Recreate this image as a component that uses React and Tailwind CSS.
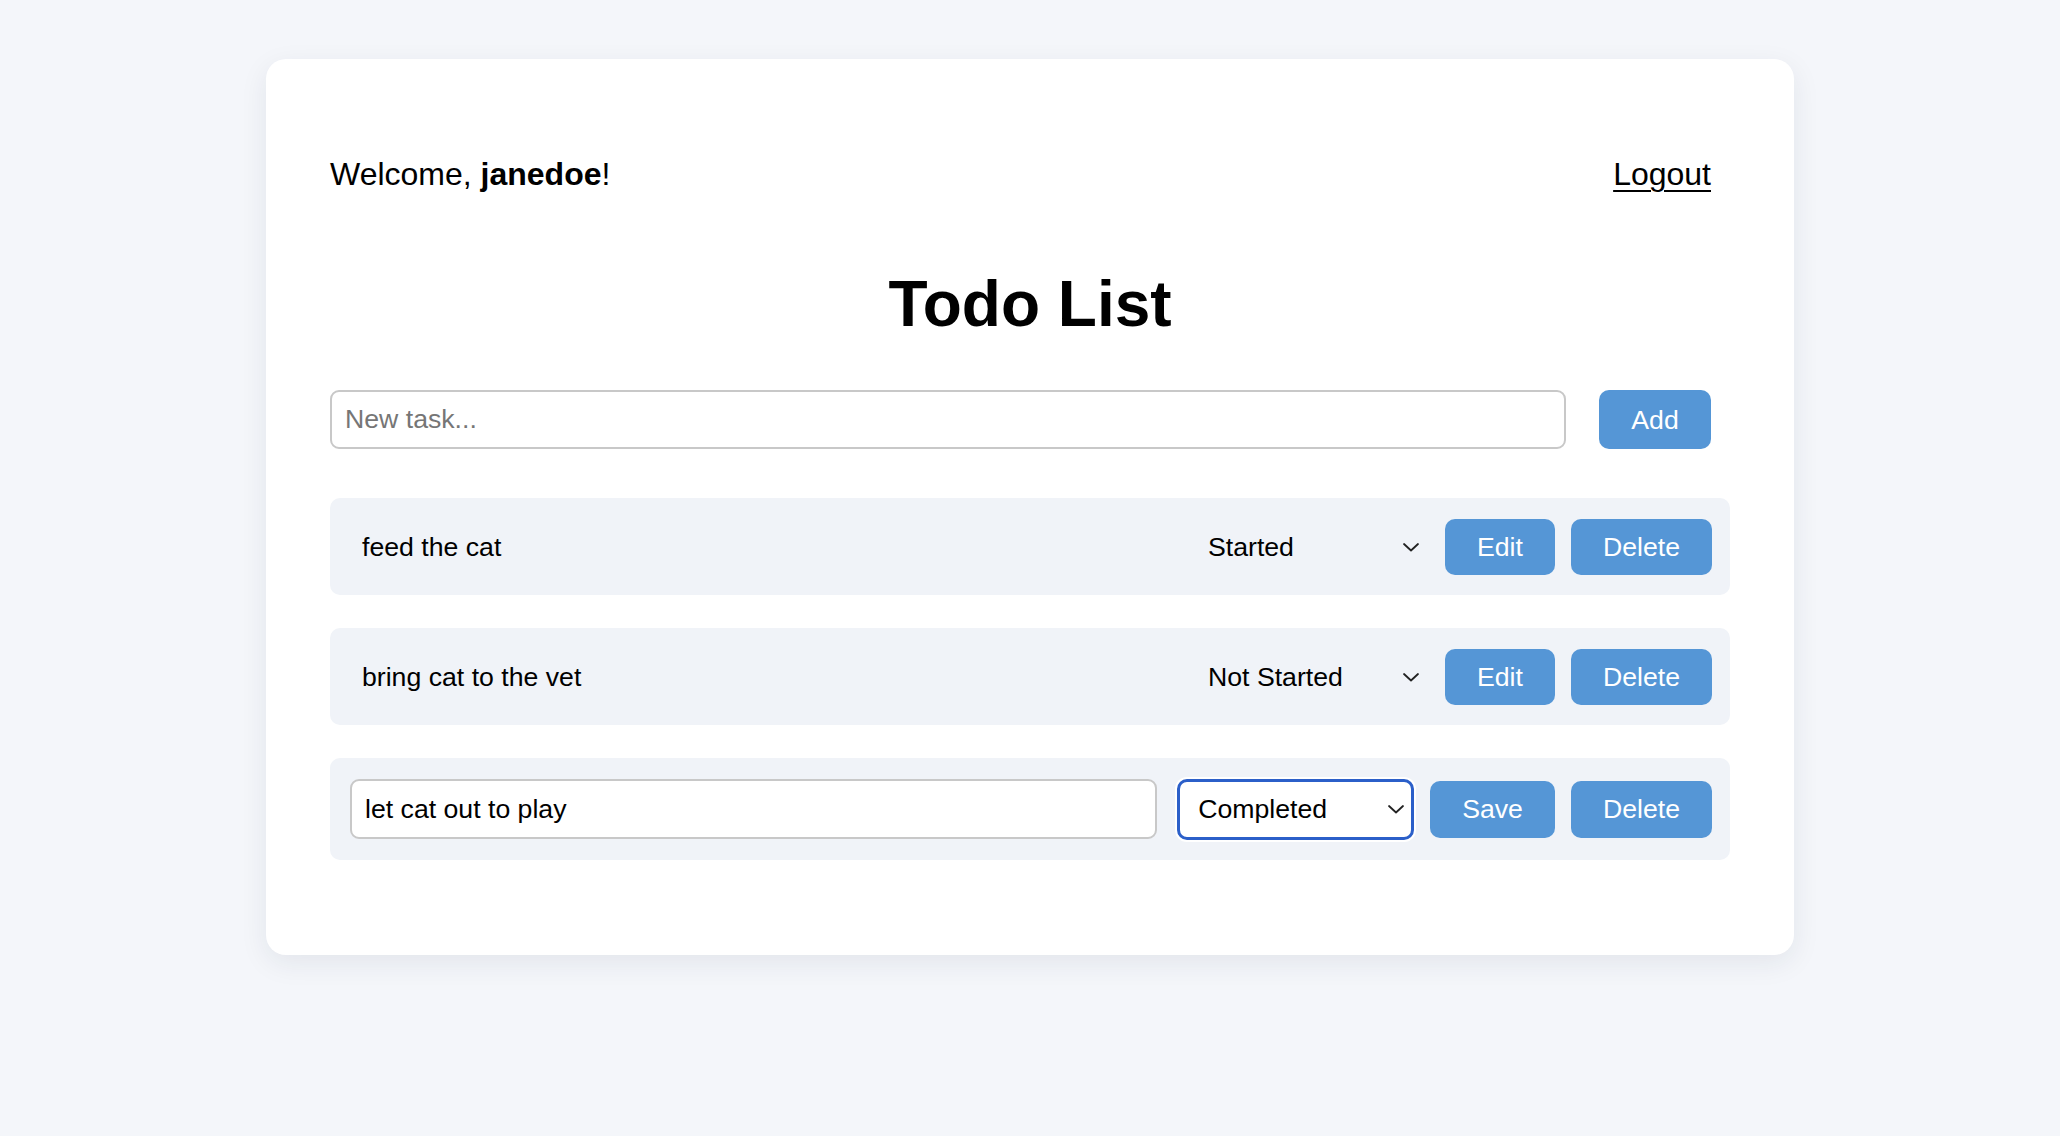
import React, { useState } from "react";

const font = { fontFamily: '"Liberation Sans", Arial, Helvetica, sans-serif' };

function Chevron() {
  return (
    <svg
      width="18"
      height="10"
      viewBox="0 0 18 10"
      fill="none"
      stroke="#222"
      strokeWidth="1.8"
      strokeLinecap="round"
      strokeLinejoin="round"
      className="pointer-events-none absolute right-[9px] top-1/2 -translate-y-1/2"
    >
      <path d="M2 2l7 6.5L16 2" />
    </svg>
  );
}

function StatusSelect({ value, editing }) {
  return (
    <div className={`relative w-[237px] shrink-0 ${editing ? "ml-[4px]" : ""}`}>
      <select
        defaultValue={value}
        className={
          editing
            ? "h-[61px] w-full appearance-none rounded-[10px] border-[3px] border-[#2b5fc9] bg-white pl-[18px] pr-10 text-[26.67px] text-black outline-none ring-2 ring-white"
            : "h-[56px] w-full appearance-none bg-transparent pl-[16px] pr-10 text-[26.67px] text-black outline-none"
        }
      >
        <option>Not Started</option>
        <option>Started</option>
        <option>Completed</option>
      </select>
      <Chevron />
    </div>
  );
}

function Btn({ children, tall }) {
  return (
    <button
      className={`${tall ? "h-[57px]" : "h-[56px]"} shrink-0 rounded-[10px] bg-[#5596d6] px-[32px] text-[26.67px] text-white`}
    >
      {children}
    </button>
  );
}

export default function App() {
  const [todos] = useState([
    { id: 1, text: "feed the cat", status: "Started" },
    { id: 2, text: "bring cat to the vet", status: "Not Started" },
    { id: 3, text: "let cat out to play", status: "Completed", editing: true },
  ]);

  return (
    <div className="min-h-screen bg-[#f4f6fa] pt-[59px] text-black" style={font}>
      <div className="mx-auto w-[1528px] rounded-[20px] bg-white px-[64px] pb-[95px] pt-[97px] shadow-[0_8px_28px_rgba(30,40,70,0.08)]">
        {/* header */}
        <div className="flex items-center justify-between pr-[19px] text-[32px] leading-[37px]">
          <div>
            Welcome, <span className="font-bold">janedoe</span>!
          </div>
          <a href="#" className="underline decoration-2 underline-offset-[5px]">
            Logout
          </a>
        </div>

        <h1 className="mt-[75px] text-center text-[64px] font-bold leading-[72px]">Todo List</h1>

        {/* new task */}
        <div className="mt-[50px] flex items-center gap-[33px] pr-[19px]">
          <input
            placeholder="New task..."
            className="h-[59px] flex-1 rounded-[9px] border-2 border-[#c8c8c8] px-[13px] text-[26.67px] outline-none placeholder:text-[#767676]"
          />
          <button className="h-[59px] w-[112px] rounded-[10px] bg-[#5596d6] text-[26.67px] text-white">
            Add
          </button>
        </div>

        {/* list */}
        <div className="mt-[49px] flex flex-col gap-[33px]">
          {todos.map((t) =>
            t.editing ? (
              <div
                key={t.id}
                className="flex h-[102px] items-center gap-4 rounded-[10px] bg-[#f0f3f8] pl-[20px] pr-[18px]"
              >
                <input
                  defaultValue={t.text}
                  className="h-[60px] min-w-0 flex-1 rounded-[9px] border-2 border-[#c8c8c8] bg-white px-[13px] text-[26.67px] outline-none"
                />
                <StatusSelect value={t.status} editing />
                <Btn tall>Save</Btn>
                <Btn tall>Delete</Btn>
              </div>
            ) : (
              <div
                key={t.id}
                className="flex h-[97px] items-center gap-4 rounded-[10px] bg-[#f0f3f8] pl-[20px] pr-[18px]"
              >
                <span className="flex-1 pl-[12px] text-[26.67px]">{t.text}</span>
                <StatusSelect value={t.status} />
                <Btn>Edit</Btn>
                <Btn>Delete</Btn>
              </div>
            )
          )}
        </div>
      </div>
    </div>
  );
}
